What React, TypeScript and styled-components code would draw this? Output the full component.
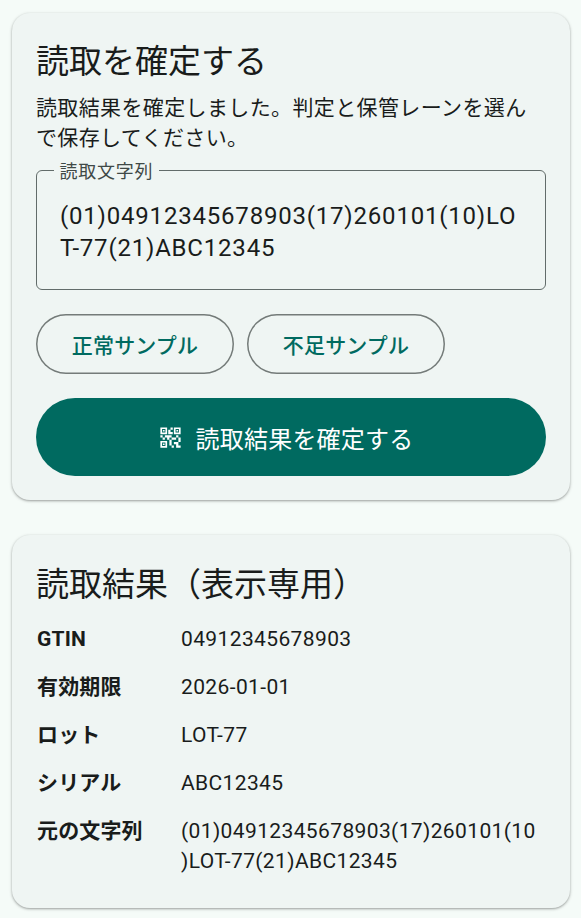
import styled, { createGlobalStyle } from "styled-components";
import { MdQrCode2 } from "react-icons/md";

const GlobalStyle = createGlobalStyle`
    html, body {
        margin: 0;
        padding: 0;
        background: #f5fbf8;
    }
    body {
        font-family: Roboto, "Noto Sans CJK JP", sans-serif;
        color: #191c1b;
    }
`;

const rows = [
    { label: "GTIN", value: "04912345678903" },
    { label: "有効期限", value: "2026-01-01" },
    { label: "ロット", value: "LOT-77" },
    { label: "シリアル", value: "ABC12345" },
    { label: "元の文字列", value: "(01)04912345678903(17)260101(10)LOT-77(21)ABC12345" },
];

export default function App() {
    return (
        <Page>
            <GlobalStyle />
            <Card>
                <Title>読取を確定する</Title>
                <Description>読取結果を確定しました。判定と保管レーンを選んで保存してください。</Description>
                <Field>
                    <FieldLabel>読取文字列</FieldLabel>
                    <FieldValue>(01)04912345678903(17)260101(10)LOT-77(21)ABC12345</FieldValue>
                </Field>
                <ChipRow>
                    <Chip>正常サンプル</Chip>
                    <Chip>不足サンプル</Chip>
                </ChipRow>
                <PrimaryButton>
                    <MdQrCode2 size={27} />
                    読取結果を確定する
                </PrimaryButton>
            </Card>
            <ResultCard>
                <Title>読取結果（表示専用）</Title>
                <ResultList>
                    {rows.map((row) => (
                        <ResultRow key={row.label}>
                            <ResultLabel>{row.label}</ResultLabel>
                            <ResultValue>{row.value}</ResultValue>
                        </ResultRow>
                    ))}
                </ResultList>
            </ResultCard>
        </Page>
    );
}

const Page = styled.div`
    display: flex;
    flex-direction: column;
    gap: 35px;
    padding: 13px 11px 9px 12px;
    height: 918px;
    box-sizing: border-box;
    overflow: hidden;
`;

const Card = styled.section`
    background: #eff5f3;
    border-radius: 18px;
    box-shadow: 0 1px 2px rgba(0, 0, 0, 0.25), 0 1px 3px 1px rgba(0, 0, 0, 0.1);
    padding: 24px;
`;

const ResultCard = styled(Card)`
    padding: 25px 24px 32px;
`;

const Title = styled.h2`
    margin: 1px 0 0;
    font-size: 33px;
    font-weight: 400;
    line-height: 48px;
`;

const Description = styled.p`
    margin: 7px 0 0;
    font-size: 21px;
    line-height: 30px;
    letter-spacing: 0.375px;
`;

const Field = styled.fieldset`
    margin: 3px 0 0;
    padding: 0 23px;
    height: 134px;
    box-sizing: border-box;
    border: 1px solid #626c6a;
    border-radius: 6px;
    min-width: 0;
`;

const FieldLabel = styled.legend`
    padding: 4px 6px 0;
    margin-left: -6.5px;
    font-size: 18px;
    line-height: 24px;
    letter-spacing: 0.75px;
    color: #3f4947;
`;

const FieldValue = styled.div`
    margin-top: 16px;
    font-size: 24px;
    line-height: 32px;
    letter-spacing: 0.8px;
    word-break: break-all;
`;

const ChipRow = styled.div`
    display: flex;
    gap: 13px;
    margin-top: 24px;
`;

const Chip = styled.button`
    width: 198px;
    height: 60px;
    padding: 0;
    box-sizing: border-box;
    border: 0;
    box-shadow: inset 0 0 0 1.5px #747b79;
    border-radius: 30px;
    background: transparent;
    color: #006a60;
    font-family: inherit;
    font-size: 21px;
    font-weight: 500;
    letter-spacing: 0.15px;
`;

const PrimaryButton = styled.button`
    display: flex;
    align-items: center;
    justify-content: center;
    gap: 12px;
    width: 100%;
    height: 78px;
    margin-top: 24px;
    padding: 0 12px 0 0;
    border: 0;
    border-radius: 39px;
    background: #006a60;
    color: #ffffff;
    font-family: inherit;
    font-size: 24px;
    font-weight: 400;
    letter-spacing: 0.2px;
`;

const ResultList = styled.div`
    display: flex;
    flex-direction: column;
    gap: 18px;
    margin-top: 15px;
`;

const ResultRow = styled.div`
    display: flex;
    font-size: 21px;
    line-height: 30px;
    letter-spacing: 0.375px;
`;

const ResultLabel = styled.div`
    flex: 0 0 145px;
    box-sizing: border-box;
    padding-left: 1px;
    font-weight: 700;
    letter-spacing: 0.15px;
`;

const ResultValue = styled.div`
    flex: 1;
    min-width: 0;
    padding-right: 6px;
    word-break: break-all;
    line-break: anywhere;
`;
